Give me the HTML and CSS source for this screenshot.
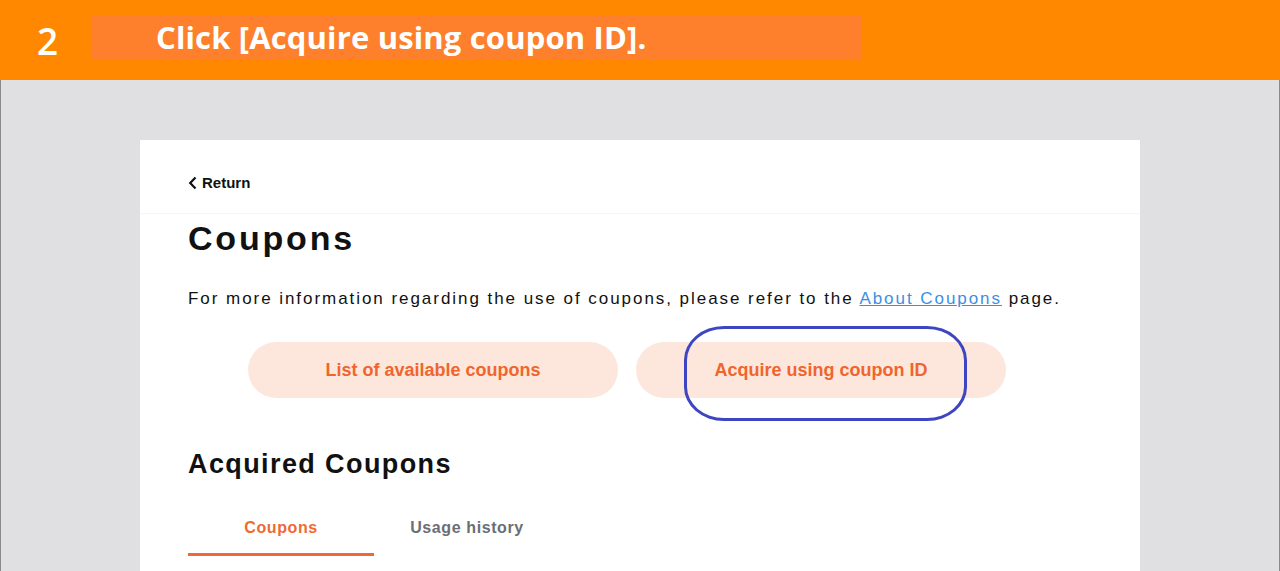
FILE: index.html
```html
<!DOCTYPE html>
<html lang="en">
<head>
<meta charset="utf-8">
<title>Coupons</title>
<link rel="stylesheet" href="styles.css">
</head>
<body>
<header class="banner">
  <span class="step">2</span>
  <div class="banner-box"><span class="banner-text">Click [Acquire using coupon ID].</span></div>
</header>
<main class="stage">
  <section class="card">
    <div class="card-head">
      <a class="back" href="#"><svg class="chev" width="9" height="14" viewBox="0 0 9 14"><path d="M7.5 1.5 L2.2 7 L7.5 12.5" fill="none" stroke="#111" stroke-width="2.2"/></svg>Return</a>
    </div>
    <div class="card-body">
      <h1 class="title">Coupons</h1>
      <p class="info">For more information regarding the use of coupons, please refer to the <a href="#" class="link">About Coupons</a> page.</p>
      <div class="actions">
        <button class="pill">List of available coupons</button>
        <button class="pill pill-target">Acquire using coupon ID<span class="ring"></span></button>
      </div>
      <h2 class="subtitle">Acquired Coupons</h2>
      <nav class="tabs">
        <a class="tab active" href="#">Coupons</a>
        <a class="tab" href="#">Usage history</a>
      </nav>
    </div>
  </section>
</main>
</body>
</html>
```

FILE: styles.css
```css
* { box-sizing: border-box; }
html, body { margin: 0; padding: 0; }
body {
  width: 1280px;
  height: 571px;
  overflow: hidden;
  background: #e0e0e2;
  font-family: "Liberation Sans", Arial, sans-serif;
}
.banner {
  height: 80px;
  background: #ff8800;
  display: flex;
  align-items: center;
  padding-left: 37px;
}
.step {
  font-family: "Open Sans", sans-serif;
  font-weight: 600;
  font-size: 37px;
  color: #fff;
  width: 55px;
}
.banner-box {
  height: 45px;
  width: 770px;
  margin-top: -5px;
  background: #fe7f2c;
  display: flex;
  align-items: center;
  padding-left: 64px;
}
.banner-text {
  font-family: "Open Sans", sans-serif;
  font-weight: 700;
  font-size: 31px;
  letter-spacing: 0.15px;
  color: #fff;
  margin-top: -2px;
}
.stage {
  height: 491px;
  padding: 60px 140px 0;
  border-left: 1px solid #8a8a8a;
  border-right: 1px solid #8a8a8a;
}
.card {
  background: #fff;
  width: 1000px;
  height: 431px;
  margin-left: -1px;
}
.card-head {
  height: 73px;
  padding: 34px 48px 0;
  box-shadow: 0 1px 1px rgba(0,0,0,0.04);
}
.back {
  display: inline-flex;
  align-items: center;
  gap: 5px;
  font-size: 15px;
  font-weight: 700;
  line-height: 18px;
  color: #111;
  text-decoration: none;
}
.card-body { padding: 0 48px; }
.title {
  margin: 5px 0 0;
  font-size: 34px;
  line-height: 40px;
  font-weight: 700;
  letter-spacing: 2.8px;
  color: #111;
}
.info {
  margin: 29px 0 0;
  font-size: 17px;
  line-height: 24px;
  letter-spacing: 1.95px;
  color: #111;
}
.link { color: #3b8fe3; }
.actions {
  margin-top: 31px;
  padding-left: 60px;
  display: flex;
  gap: 18px;
}
.pill {
  position: relative;
  width: 370px;
  height: 56px;
  border: none;
  border-radius: 28px;
  background: #fde7dc;
  color: #f0652d;
  font-family: "Liberation Sans", Arial, sans-serif;
  font-weight: 700;
  font-size: 18px;
}
.ring {
  position: absolute;
  left: 48px;
  top: -16px;
  width: 283px;
  height: 95px;
  border: 3px solid #3d45c1;
  border-radius: 40px / 34px;
}
.subtitle {
  margin: 50px 0 0;
  font-size: 27px;
  line-height: 32px;
  font-weight: 700;
  letter-spacing: 1.4px;
  color: #111;
}
.tabs {
  margin-top: 39px;
  display: flex;
}
.tab {
  width: 186px;
  text-align: center;
  font-size: 16px;
  font-weight: 700;
  letter-spacing: 0.6px;
  color: #6b6e75;
  text-decoration: none;
  padding-bottom: 16px;
  border-bottom: 3px solid transparent;
}
.tab.active {
  color: #ed6a35;
  border-bottom-color: #ed6a35;
}
```
